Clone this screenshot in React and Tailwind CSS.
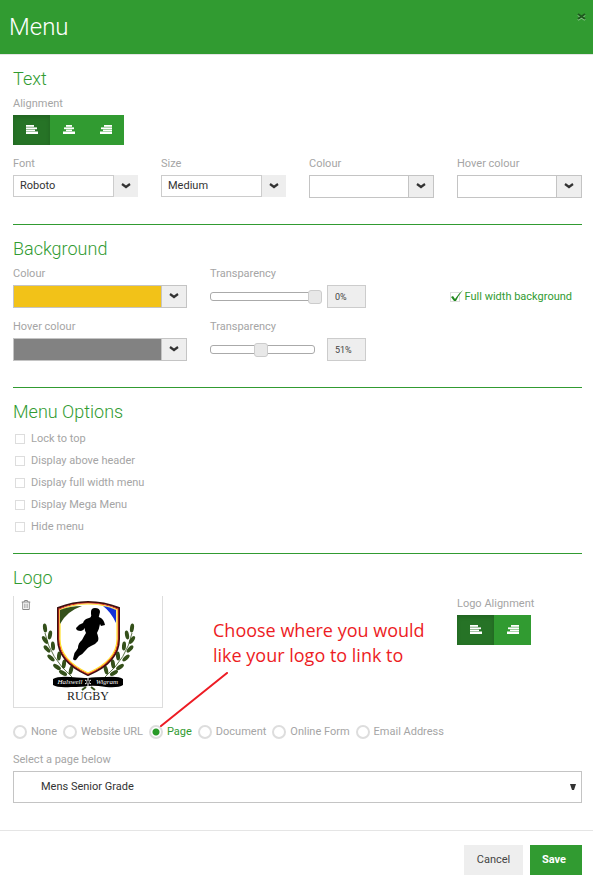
import React, { useState } from 'react';
import { FaRegTrashAlt } from 'react-icons/fa';

const alignBars = {
  left: [[0, 8], [0, 11], [0, 9], [0, 12]],
  center: [[3, 6], [1, 10], [3, 6], [0, 12]],
  right: [[4, 8], [1, 11], [3, 9], [0, 12]],
};

const AlignIcon = ({ side }) => (
  <svg width="12" height="9" viewBox="0 0 12 9" fill="white">
    <rect x={alignBars[side][0][0]} y="0" width={alignBars[side][0][1]} height="1.8" />
    <rect x={alignBars[side][1][0]} y="2.4" width={alignBars[side][1][1]} height="1.8" />
    <rect x={alignBars[side][2][0]} y="4.6" width={alignBars[side][2][1]} height="1.6" />
    <rect x={alignBars[side][3][0]} y="6.5" width={alignBars[side][3][1]} height="2.5" />
  </svg>
);

const AlignButtons = ({ sides }) => {
  const [active, setActive] = useState('left');

  return (
    <div className="flex">
      {sides.map((side) => (
        <button
          key={side}
          type="button"
          aria-label={`Align ${side}`}
          onClick={() => setActive(side)}
          className={`flex h-[30px] w-[37px] items-center justify-center pb-[2px] ${active === side ? 'bg-[#267326] shadow-[inset_0_2px_4px_rgba(0,0,0,0.15)]' : 'bg-[#319b31]'}`}
        >
          <AlignIcon side={side} />
        </button>
      ))}
    </div>
  );
};

const Chevron = () => (
  <svg width="10" height="6" viewBox="0 0 10 6" fill="none" stroke="#333" strokeWidth="2.2">
    <path d="M1 1 L5 4 L9 1" />
  </svg>
);

const labelStyle = 'block text-[11px] leading-4 text-[#a5a5a5]';

const SelectField = ({ id, label, options }) => (
  <div>
    <label htmlFor={id} className={labelStyle}>{label}</label>
    <div className="mt-[3px] flex h-[22px]">
      <select id={id} className="min-w-0 flex-1 appearance-none border border-[#ccc] bg-white px-[6px] text-[11px] leading-4 text-[#333]">
        {options.map((o) => <option key={o}>{o}</option>)}
      </select>
      <span className="flex w-6 items-center justify-center bg-[#eee]"><Chevron /></span>
    </div>
  </div>
);

const ColourField = ({ id, label, swatch }) => (
  <div>
    <label htmlFor={id} className={labelStyle}>{label}</label>
    <button id={id} type="button" className="mt-[3px] flex h-[23px] w-full">
      <span className={`h-full flex-1 border border-[#c4c4c4] ${swatch}`}></span>
      <span className="-ml-px flex h-full w-[26px] items-center justify-center border border-[#c4c4c4] bg-[#eee] pb-px"><Chevron /></span>
    </button>
  </div>
);

const TransparencyField = ({ id, initial }) => {
  const [value, setValue] = useState(initial);

  return (
    <div>
      <label htmlFor={id} className={labelStyle}>Transparency</label>
      <div className="mt-[3px] flex items-center gap-3">
        <div className="flex h-[9px] min-w-0 flex-1 items-center rounded-[3px] border border-[#aaa] bg-white">
          <input
            id={id}
            type="range"
            min="0"
            max="100"
            value={100 - value}
            onChange={(e) => setValue(100 - e.target.value)}
            className="-mx-2 h-[14px] w-[calc(100%+16px)] shrink-0 appearance-none bg-transparent [&::-webkit-slider-thumb]:h-[14px] [&::-webkit-slider-thumb]:w-[14px] [&::-webkit-slider-thumb]:appearance-none [&::-webkit-slider-thumb]:rounded-[3px] [&::-webkit-slider-thumb]:border [&::-webkit-slider-thumb]:border-[#ccc] [&::-webkit-slider-thumb]:bg-[#e8e8e8]"
          />
        </div>
        <input
          type="text"
          readOnly
          aria-label="Transparency value"
          value={`${value}%`}
          className="h-[23px] w-[39px] border border-[#ccc] bg-[#eee] px-[7px] text-[9px] text-[#444]"
        />
      </div>
    </div>
  );
};

const Section = ({ title, children, className }) => (
  <section className={className}>
    <h2 className="text-lg leading-6 font-light text-[#319b31]">{title}</h2>
    {children}
  </section>
);

const leaves = [
  [15, 32, -8], [20, 39, 10], [15, 44, -35], [23, 50, -5], [17, 53, -42], [29, 60, 5],
  [21, 62, -48], [34, 68, 8], [27, 71, -55], [41, 74, 15], [33, 77, -60],
];

const Wreath = () => (
  <g fill="#34501a">
    <path d="M15 37 Q20 62 42 81" fill="none" stroke="#34501a" strokeWidth="0.8" />
    {leaves.map(([x, y, r]) => (
      <ellipse key={`${x}-${y}`} cx={x} cy={y} rx="2" ry="4.5" transform={`rotate(${r} ${x} ${y})`} />
    ))}
  </g>
);

const ClubLogo = () => (
  <svg width="120" height="110" viewBox="0 0 120 110" role="img" aria-label="Halswell Wigram Rugby">
    <Wreath />
    <g transform="translate(117 0) scale(-1 1)"><Wreath /></g>
    <path d="M28 12 Q43 6 58 6 Q74 6 89 12 V43 C89 61 75 72 58 79 C42 72 28 61 28 43 Z" fill="white" stroke="#3a1010" strokeWidth="2" />
    <path d="M29 13 Q43 7 58 7 Q74 7 88 13 V43 C88 60 74 71 58 78 C43 71 29 60 29 43 Z" fill="white" stroke="#d92a1c" strokeWidth="1.2" />
    <path d="M30 14 Q43 8 58 8 Q74 8 87 14 V43 C87 59 74 70 58 77 C43 70 30 59 30 43 Z" fill="white" stroke="#ffe12b" strokeWidth="1.2" />
    <path d="M30 14 Q40 10 52 10 Q37 15 30 28 Z" fill="#34501a" />
    <path d="M73 10 Q80 11 86 14 V27 Q81 16 73 10 Z" fill="#1331d8" />
    <path
      fill="black"
      d="M61 16 Q61 12 65 12 Q70 12 70 16 L69 20 Q68 21 71 22 Q74 24 75 29 L71 30 L70 28 Q69 34 67 37 Q69 42 68 45 Q66 48 61 50 Q58 51 55 55 Q52 59 49 60 L46 64 Q44 65 43 63 L44 59 Q44 57 46 55 L48 52 Q48 47 52 44 Q54 40 56 37 Q54 34 55 32 Q53 35 51 35 Q46 35 46 32 Q49 28 53 27 Q54 23 59 22 Q62 21 61 18 Z"
    />
    <path d="M23 83 Q28 80 41 81 Q53 82 58 82 Q65 81 76 81 Q89 80 93 83 V89 Q89 92 76 91 Q64 89 58 90 Q52 91 41 91 Q28 92 23 89 Z" fill="black" />
    <path d="M56 91 L52 94 M61 91 L65 94" stroke="#34501a" strokeWidth="2" />
    <path d="M58 82 V90 M55 84 L61 88 M61 84 L55 88" stroke="white" />
    <circle cx="58" cy="86" r="1" fill="black" />
    <text x="40" y="88" fill="white" fontSize="7" fontStyle="italic" textAnchor="middle" fontFamily="'Liberation Serif', serif">Halswell</text>
    <text x="77" y="88" fill="white" fontSize="7" fontStyle="italic" textAnchor="middle" fontFamily="'Liberation Serif', serif">Wigram</text>
    <text x="58" y="104" fill="#222" fontSize="12" textAnchor="middle" fontFamily="'Liberation Serif', serif">RUGBY</text>
  </svg>
);

const menuOptions = [
  'Lock to top',
  'Display above header',
  'Display full width menu',
  'Display Mega Menu',
  'Hide menu',
];

const linkTypes = ['None', 'Website URL', 'Page', 'Document', 'Online Form', 'Email Address'];

const App = () => {
  const [linkType, setLinkType] = useState('Page');
  const [fullWidth, setFullWidth] = useState(true);

  return (
    <div className="min-h-screen bg-white font-['Roboto',sans-serif]">
      <header className="flex h-[55px] items-center justify-between border-b border-[#e5e5e5] bg-[#319b31] pr-[7px] pl-[9px]">
        <h1 className="text-2xl font-light text-white">Menu</h1>
        <button type="button" aria-label="Close" className="mb-5 flex">
          <svg width="9" height="8" viewBox="0 0 9 8" fill="none" strokeWidth="2">
            <path d="M1 2 L8 7 M8 2 L1 7" stroke="#8cc88c" />
            <path d="M1 1 L8 6 M8 1 L1 6" stroke="#1e5a1e" />
          </svg>
        </button>
      </header>

      <main className="pr-[11px] pl-[13px]">
        <Section title="Text" className="border-b border-[#319b31] pt-3 pb-[26px]">
          <p className={`mt-[5px] ${labelStyle}`}>Alignment</p>
          <div className="mt-[3px]"><AlignButtons sides={['left', 'center', 'right']} /></div>
          <div className="mt-[11px] grid grid-cols-4 gap-[23px]">
            <SelectField id="font" label="Font" options={['Roboto', 'Open Sans', 'Lato']} />
            <SelectField id="size" label="Size" options={['Medium', 'Small', 'Large']} />
            <ColourField id="text-colour" label="Colour" swatch="bg-white" />
            <ColourField id="text-hover" label="Hover colour" swatch="bg-white" />
          </div>
        </Section>

        <Section title="Background" className="border-b border-[#319b31] pt-3 pb-[26px]">
          <div className="mt-[5px] grid grid-cols-[174fr_156fr_193fr] gap-x-[23px] gap-y-[11px]">
            <ColourField id="bg-colour" label="Colour" swatch="bg-[#f2c218]" />
            <TransparencyField id="bg-transparency" initial={0} />
            <label className="flex items-center justify-end gap-[5px] self-end pr-[10px] pb-[3px] text-[11px] leading-4 text-[#319b31]">
              <span className="relative flex">
                <input
                  type="checkbox"
                  checked={fullWidth}
                  onChange={() => setFullWidth(!fullWidth)}
                  className="h-[10px] w-[10px] appearance-none border border-[#ddd] bg-white"
                />
                {fullWidth && (
                  <svg className="pointer-events-none absolute bottom-0 left-px" width="12" height="12" viewBox="0 0 12 12">
                    <path d="M0 7 L2 6 L4 9 Q7 4 12 0 Q7 6 5 11 L3 11 Z" fill="#22891f" />
                  </svg>
                )}
              </span>
              Full width background
            </label>
            <ColourField id="bg-hover" label="Hover colour" swatch="bg-[#828282]" />
            <TransparencyField id="hover-transparency" initial={51} />
          </div>
        </Section>

        <Section title="Menu Options" className="border-b border-[#319b31] pt-3 pb-[15px]">
          <div className="mt-1 flex flex-col">
            {menuOptions.map((name) => (
              <label key={name} className="flex h-[22px] items-center gap-[6px] self-start pl-[2px] text-[11px] text-[#a5a5a5]">
                <input type="checkbox" className="h-[10px] w-[10px] appearance-none border border-[#ddd] bg-white checked:bg-[#319b31]" />
                {name}
              </label>
            ))}
          </div>
        </Section>

        <Section title="Logo" className="pt-3 pb-[27px]">
          <div className="relative mt-[6px] grid grid-cols-4 gap-[23px]">
            <div className="relative col-span-3 h-[112px] w-[150px] border-x border-b border-[#ddd] pl-4">
              <ClubLogo />
              <button type="button" aria-label="Delete logo" className="absolute top-1 left-[7px] text-[10px] text-[#888]">
                <FaRegTrashAlt />
              </button>
            </div>
            <div>
              <p className={labelStyle}>Logo Alignment</p>
              <div className="mt-[3px]"><AlignButtons sides={['left', 'right']} /></div>
            </div>
            <p className="absolute top-[22px] left-[200px] font-['Open_Sans',sans-serif] text-lg leading-[25px] text-[#ed1c24]">
              Choose where you would<br />like your logo to link to
            </p>
            <svg className="pointer-events-none absolute top-[76px] left-[146px] z-10" width="70" height="56" viewBox="0 0 70 56">
              <path d="M2 54 L68 1" stroke="#ed1c24" strokeWidth="2" strokeLinecap="round" />
            </svg>
          </div>

          <div className="mt-4 flex flex-wrap gap-x-[6px]">
            {linkTypes.map((type) => (
              <label
                key={type}
                className={`flex items-center gap-1 text-[11px] leading-4 ${linkType === type ? 'text-[#319b31]' : 'text-[#a5a5a5]'}`}
              >
                <input
                  type="radio"
                  name="link-type"
                  checked={linkType === type}
                  onChange={() => setLinkType(type)}
                  className="h-[14px] w-[14px] appearance-none rounded-full border-2 border-[#ddd] bg-white checked:bg-[radial-gradient(circle,#289a28_3px,white_4px)]"
                />
                {type}
              </label>
            ))}
          </div>

          <label htmlFor="page" className={`mt-3 ${labelStyle}`}>Select a page below</label>
          <div className="relative mt-[3px]">
            <select id="page" className="block h-8 w-full appearance-none border border-[#c4c4c4] bg-white pl-[27px] text-[11px] text-[#333]">
              <option>Mens Senior Grade</option>
            </select>
            <svg className="pointer-events-none absolute top-[13px] right-[6px]" width="6" height="6" viewBox="0 0 6 6">
              <path d="M0 0 H6 L4 6 H2 Z" fill="#333" />
            </svg>
          </div>
        </Section>
      </main>

      <footer className="flex justify-end gap-[7px] border-t border-[#e5e5e5] pt-[14px] pr-[11px] pb-[15px]">
        <button type="button" className="h-[30px] w-[59px] bg-[#eee] text-[11px] text-[#444]">Cancel</button>
        <button type="button" className="h-[30px] w-[52px] bg-[#319b31] pr-1 text-[11px] font-bold text-white">Save</button>
      </footer>
    </div>
  );
};

export default App;
